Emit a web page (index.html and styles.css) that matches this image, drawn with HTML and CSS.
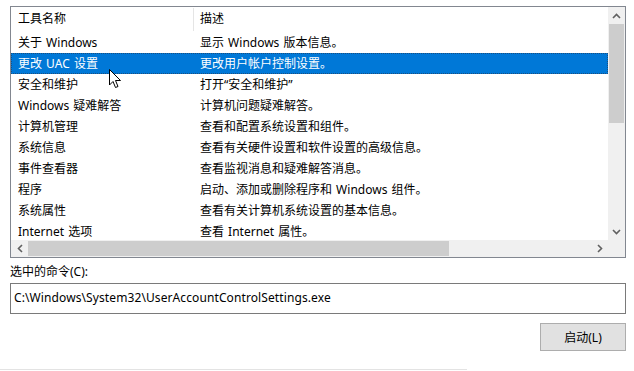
FILE: index.html
```html
<!DOCTYPE html>
<html lang="zh-CN">
<head>
    <meta charset="UTF-8" />
    <title>工具</title>
    <link rel="stylesheet" href="styles.css">
</head>
<body>
<div class="dialog">
    <div class="listbox">
        <div class="list-main">
            <div class="list-view">
                <div class="list-header">
                    <div class="col col-name">工具名称</div>
                    <div class="col col-desc">描述</div>
                </div>
                <div class="row"><div class="col col-name">关于 Windows</div><div class="col col-desc">显示 Windows 版本信息。</div></div>
                <div class="row selected"><div class="col col-name">更改 UAC 设置</div><div class="col col-desc">更改用户帐户控制设置。</div></div>
                <div class="row"><div class="col col-name">安全和维护</div><div class="col col-desc">打开“安全和维护”</div></div>
                <div class="row"><div class="col col-name">Windows 疑难解答</div><div class="col col-desc">计算机问题疑难解答。</div></div>
                <div class="row"><div class="col col-name">计算机管理</div><div class="col col-desc">查看和配置系统设置和组件。</div></div>
                <div class="row"><div class="col col-name">系统信息</div><div class="col col-desc">查看有关硬件设置和软件设置的高级信息。</div></div>
                <div class="row"><div class="col col-name">事件查看器</div><div class="col col-desc">查看监视消息和疑难解答消息。</div></div>
                <div class="row"><div class="col col-name">程序</div><div class="col col-desc">启动、添加或删除程序和 Windows 组件。</div></div>
                <div class="row"><div class="col col-name">系统属性</div><div class="col col-desc">查看有关计算机系统设置的基本信息。</div></div>
                <div class="row"><div class="col col-name">Internet 选项</div><div class="col col-desc">查看 Internet 属性。</div></div>
            </div>
            <div class="vscroll">
                <div class="arrow">
                    <svg width="9" height="6" viewBox="0 0 9 6"><path d="M1 5 L4.5 1.5 L8 5" fill="none" stroke="#606060" stroke-width="1.6"/></svg>
                </div>
                <div class="vthumb"></div>
                <div class="vtrack"></div>
                <div class="arrow">
                    <svg width="9" height="6" viewBox="0 0 9 6"><path d="M1 1 L4.5 4.5 L8 1" fill="none" stroke="#606060" stroke-width="1.6"/></svg>
                </div>
            </div>
        </div>
        <div class="list-bottom">
            <div class="hscroll">
                <div class="arrow">
                    <svg width="6" height="9" viewBox="0 0 6 9"><path d="M5 1 L1.5 4.5 L5 8" fill="none" stroke="#606060" stroke-width="1.6"/></svg>
                </div>
                <div class="hthumb"></div>
                <div class="htrack"></div>
                <div class="arrow">
                    <svg width="6" height="9" viewBox="0 0 6 9"><path d="M1 1 L4.5 4.5 L1 8" fill="none" stroke="#606060" stroke-width="1.6"/></svg>
                </div>
            </div>
            <div class="corner"></div>
        </div>
    </div>

    <div class="cmd-label">选中的命令(C):</div>
    <div class="cmd-box">C:\Windows\System32\UserAccountControlSettings.exe</div>

    <div class="actions">
        <button class="btn">启动(L)</button>
    </div>

    <div class="bottom-edge"></div>

    <svg class="cursor" width="13" height="20" viewBox="0 0 13 20">
        <path d="M0.5 0.5 L0.5 16 L4 12.5 L6.5 18.5 L9 17.5 L6.5 11.5 L11.5 11.5 Z" fill="#fff" stroke="#000" stroke-width="1" stroke-linejoin="miter"/>
    </svg>
</div>
</body>
</html>
```

FILE: styles.css
```css
body {
    margin: 0;
    background: #fff;
    font-family: "Segoe UI", "Noto Sans", "Noto Sans CJK SC", sans-serif;
    font-size: 12px;
    color: #000;
}

.dialog {
    position: relative;
    width: 634px;
    height: 371px;
    padding: 6px 8px 0 10px;
    box-sizing: border-box;
}

.listbox {
    width: 616px;
    height: 252px;
    border: 1px solid #828790;
    box-sizing: border-box;
    display: flex;
    flex-direction: column;
}

.list-main {
    display: flex;
    height: 233px;
}

.list-view {
    width: 597px;
    overflow: hidden;
}

.list-header,
.row {
    display: grid;
    grid-template-columns: 183px 1fr;
    white-space: nowrap;
    word-spacing: 1px;
}

.list-header {
    height: 25px;
    line-height: 23px;
}

.list-header .col-name {
    border-right: 1px solid #e5e5e5;
    margin: 1px 0 1px 0;
    line-height: 21px;
}

.list-header .col-desc {
    padding-left: 6px;
}

.row {
    height: 21px;
    line-height: 21px;
}

.col-name {
    padding-left: 7px;
}

.col-desc {
    padding-left: 6px;
}

.row.selected {
    background: #0078d7;
    color: #fff;
    outline: 1px dotted #1b4f80;
    outline-offset: -1px;
}

.vscroll {
    width: 17px;
    background: #f0f0f0;
    display: flex;
    flex-direction: column;
}

.vscroll .arrow {
    height: 17px;
    display: flex;
    align-items: center;
    justify-content: center;
}

.vthumb {
    height: 99px;
    margin: 0 1px;
    background: #cdcdcd;
}

.vtrack {
    flex: 1;
}

.list-bottom {
    display: flex;
    height: 17px;
}

.hscroll {
    width: 597px;
    background: #f0f0f0;
    display: flex;
}

.hscroll .arrow {
    width: 17px;
    display: flex;
    align-items: center;
    justify-content: center;
}

.hthumb {
    width: 421px;
    margin: 1px 0;
    background: #cdcdcd;
}

.htrack {
    flex: 1;
}

.corner {
    width: 17px;
    background: #f0f0f0;
}

.cmd-label {
    margin-top: 4px;
    height: 20px;
    line-height: 20px;
}

.cmd-box {
    width: 616px;
    height: 31px;
    margin-top: 1px;
    border: 1px solid #7a7a7a;
    box-sizing: border-box;
    padding-left: 3px;
    line-height: 27px;
    letter-spacing: 0.1px;
    white-space: nowrap;
}

.actions {
    display: flex;
    justify-content: flex-end;
    width: 616px;
    margin-top: 9px;
}

.btn {
    width: 86px;
    height: 28px;
    background: #e1e1e1;
    border: 1px solid #adadad;
    font-family: inherit;
    font-size: 12px;
    color: #000;
    padding: 0;
}

.bottom-edge {
    position: absolute;
    left: 0;
    bottom: 1px;
    width: 467px;
    height: 1px;
    background: #e3e3e3;
}

.cursor {
    position: absolute;
    left: 109px;
    top: 69px;
}
```
